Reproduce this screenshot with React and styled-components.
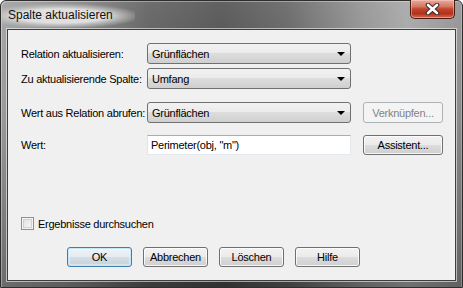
import styled, { createGlobalStyle, css } from 'styled-components';

const GlobalStyle = createGlobalStyle`
  html, body {
    margin: 0;
    padding: 0;
    background: #ffffff;
  }
  body {
    font-family: 'Liberation Sans', Arial, sans-serif;
    font-size: 11px;
    letter-spacing: -0.25px;
    color: #000;
  }
`;

const Window = styled.div`
  width: 463px;
  height: 288px;
  box-sizing: border-box;
  display: flex;
  flex-direction: column;
  padding: 0 6px 6px;
  border: 1px solid #2e2e2e;
  border-radius: 6px 6px 0 0;
  background:
    linear-gradient(180deg, rgba(255, 255, 255, 0.15) 0%, rgba(0, 0, 0, 0) 40%, rgba(0, 0, 0, 0.3) 100%),
    linear-gradient(90deg, #9a9a9a 0%, #858585 14%, #555555 32%, #464646 48%, #5a5a5a 62%, #8a8a8a 78%, #a0a0a0 88%, #8a8a8a 100%);
  box-shadow: inset 1px 1px 0 rgba(255, 255, 255, 0.35), inset -1px 0 0 rgba(255, 255, 255, 0.25);
`;

const TitleBar = styled.div`
  height: 28px;
  flex: none;
  display: flex;
  justify-content: space-between;
  align-items: flex-start;
`;

const Title = styled.span`
  margin: 3px 0 0 -6px;
  padding: 4px 22px 5px 7px;
  font-size: 12px;
  letter-spacing: 0;
  color: #101010;
  background: radial-gradient(ellipse 60% 55% at 45% 52%, rgba(226, 226, 226, 0.97) 55%, rgba(200, 200, 200, 0.6) 78%, rgba(160, 160, 160, 0) 100%);
`;

const CloseButton = styled.div`
  width: 45px;
  height: 19px;
  margin-top: -1px;
  margin-right: 1px;
  display: flex;
  align-items: center;
  justify-content: center;
  box-sizing: border-box;
  border: 1px solid #4a1a12;
  border-top: none;
  border-radius: 0 0 5px 5px;
  background: linear-gradient(180deg, #e9a99b 0%, #d77a66 35%, #c2452d 50%, #b5301b 75%, #cf6a4f 100%);
  box-shadow: inset 0 0 0 1px rgba(255, 220, 210, 0.45);
`;

const Client = styled.div`
  flex: 1;
  display: flex;
  flex-direction: column;
  padding: 13px 0 13px 13px;
  background: #f0f0f0;
  border: 1px solid #3e3e3e;
  box-shadow: 0 0 0 1px rgba(255, 255, 255, 0.55);
`;

const Row = styled.div`
  display: flex;
  align-items: center;
  height: 21px;
  margin-top: ${(p) => p.$gap || 0}px;
`;

const Label = styled.div`
  width: 126px;
  flex: none;
  white-space: nowrap;
`;

const Combo = styled.div`
  width: 204px;
  height: 21px;
  box-sizing: border-box;
  display: flex;
  align-items: center;
  justify-content: space-between;
  padding: 0 4px 0 4px;
  border: 1px solid #707070;
  border-radius: 3px;
  background: linear-gradient(180deg, #f2f2f2 0%, #ebebeb 49%, #dddddd 50%, #cfcfcf 100%);
`;

const Arrow = styled.span`
  width: 0;
  height: 0;
  margin-right: 1px;
  border-left: 4px solid transparent;
  border-right: 4px solid transparent;
  border-top: 4px solid #000;
`;

const TextBox = styled.div`
  width: 204px;
  height: 20px;
  box-sizing: border-box;
  display: flex;
  align-items: center;
  padding: 0 3px;
  background: #ffffff;
  border: 1px solid #e3e9ef;
  border-top-color: #abadb3;
  border-left-color: #e2e3ea;
`;

const Button = styled.div`
  width: ${(p) => p.$w || 65}px;
  height: ${(p) => p.$h || 20}px;
  box-sizing: border-box;
  flex: none;
  display: flex;
  align-items: center;
  justify-content: center;
  border: 1px solid #707070;
  border-radius: 3px;
  background: linear-gradient(180deg, #f2f2f2 0%, #ebebeb 49%, #dddddd 50%, #cfcfcf 100%);
  box-shadow: inset 0 0 0 1px rgba(255, 255, 255, 0.8);
  ${(p) =>
    p.$default &&
    css`
      border-color: #3c7fb1;
      box-shadow: inset 0 0 0 1px #c4e5f6, inset 0 0 0 2px rgba(255, 255, 255, 0.35);
      background: linear-gradient(180deg, #eef3f6 0%, #e4ebf0 49%, #d6dee4 50%, #c8d2d9 100%);
    `}
  ${(p) =>
    p.$disabled &&
    css`
      border-color: #adb2b5;
      background: #f4f4f4;
      color: #838383;
      box-shadow: none;
    `}
`;

const SideButtonSlot = styled.div`
  margin-left: 12px;
  display: flex;
`;

const Spacer = styled.div`
  flex: 1;
`;

const CheckRow = styled.label`
  display: flex;
  align-items: center;
  gap: 4px;
`;

const CheckBox = styled.span`
  width: 13px;
  height: 13px;
  box-sizing: border-box;
  border: 1px solid #8e8f8f;
  background: linear-gradient(135deg, #dcdcdc 0%, #f2f2f2 70%, #ffffff 100%);
  box-shadow: inset 0 0 0 1px #f4f4f4, inset 0 0 0 2px #d0d0d0;
`;

const ButtonBar = styled.div`
  display: flex;
  gap: 11px;
  margin: 17px 0 0 46px;
`;

function CloseIcon() {
  return (
    <svg width="15" height="12" viewBox="0 0 15 12">
      <path d="M3 2 L12 10 M12 2 L3 10" stroke="#3b2a28" strokeWidth="4.6" strokeLinecap="round" />
      <path d="M3 2 L12 10 M12 2 L3 10" stroke="#ffffff" strokeWidth="2.6" strokeLinecap="round" />
    </svg>
  );
}

export default function App() {
  return (
    <>
      <GlobalStyle />
      <Window>
        <TitleBar>
          <Title>Spalte aktualisieren</Title>
          <CloseButton>
            <CloseIcon />
          </CloseButton>
        </TitleBar>
        <Client>
          <Row>
            <Label>Relation aktualisieren:</Label>
            <Combo>
              <span>Grünflächen</span>
              <Arrow />
            </Combo>
          </Row>
          <Row $gap={4}>
            <Label>Zu aktualisierende Spalte:</Label>
            <Combo>
              <span>Umfang</span>
              <Arrow />
            </Combo>
          </Row>
          <Row $gap={13}>
            <Label>Wert aus Relation abrufen:</Label>
            <Combo>
              <span>Grünflächen</span>
              <Arrow />
            </Combo>
            <SideButtonSlot>
              <Button $w={80} $h={21} $disabled>
                Verknüpfen...
              </Button>
            </SideButtonSlot>
          </Row>
          <Row $gap={11}>
            <Label>Wert:</Label>
            <TextBox>Perimeter(obj, "m")</TextBox>
            <SideButtonSlot>
              <Button $w={80} $h={20}>
                Assistent...
              </Button>
            </SideButtonSlot>
          </Row>
          <Spacer />
          <CheckRow>
            <CheckBox />
            <span>Ergebnisse durchsuchen</span>
          </CheckRow>
          <ButtonBar>
            <Button $default>OK</Button>
            <Button>Abbrechen</Button>
            <Button>Löschen</Button>
            <Button>Hilfe</Button>
          </ButtonBar>
        </Client>
      </Window>
    </>
  );
}
